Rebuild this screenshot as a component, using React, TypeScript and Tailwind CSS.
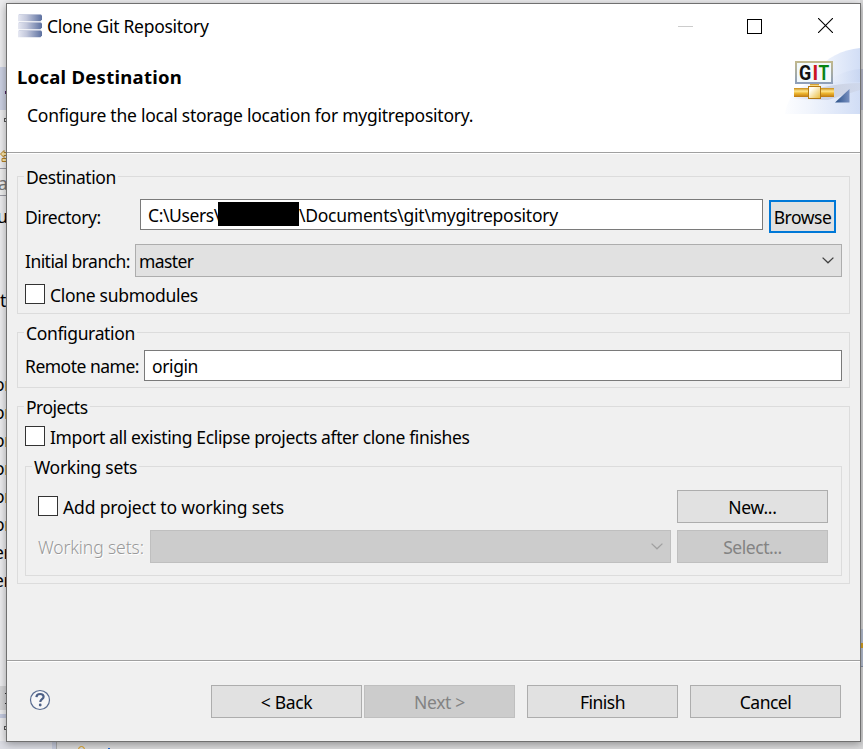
import type { ReactNode } from "react";
import clsx from "clsx";

function Text({ children, className }: { children: ReactNode; className?: string }) {
  return <span className={clsx("block whitespace-pre leading-[18px] pb-[2px]", className)}>{children}</span>;
}

function Group({ title, titleClass, className, children }: { title: string; titleClass: string; className: string; children: ReactNode }) {
  return (
    <section className={clsx("border border-[#dcdcdc]", className)}>
      <div className={clsx("-mt-[9px] ml-[6px] h-5 bg-[#f0f0f0] pl-[2px]", titleClass)}>
        <Text>{title}</Text>
      </div>
      {children}
    </section>
  );
}

function Check() {
  return <span className="block size-5 shrink-0 border border-[#333] bg-white" />;
}

function Button({ children, disabled, className }: { children: ReactNode; disabled?: boolean; className?: string }) {
  return (
    <button
      className={clsx(
        "flex h-[33px] w-[151px] shrink-0 items-center justify-center border pt-[2px]",
        disabled ? "border-[#bfbfbf] bg-[#cccccc] text-[#838383]" : "border-[#adadad] bg-[#e1e1e1]",
        className,
      )}
    >
      {children}
    </button>
  );
}

function Chevron({ className }: { className: string }) {
  return (
    <svg width="12" height="7" viewBox="0 0 12 7" fill="none" stroke="currentColor" strokeWidth="1.3" className={className}>
      <path d="M0.6 0.6 6 5.8 11.4 0.6" />
    </svg>
  );
}

function DatabaseIcon() {
  return (
    <svg width="24" height="24" viewBox="0 0 24 24">
      <defs>
        <linearGradient id="db">
          <stop offset="0" stopColor="#e6e8f2" />
          <stop offset="0.35" stopColor="#c3c8dc" />
          <stop offset="1" stopColor="#5c70a0" />
        </linearGradient>
      </defs>
      {[0, 8, 16].map((y) => (
        <g key={y}>
          <path d={`M0 ${y + 0.5}H23L24 ${y + 1.5}V${y + 5.5}L22.5 ${y + 7.2}H0Z`} fill="url(#db)" />
          <path d={`M1 ${y + 0.5}H22`} stroke="#a9b2ce" strokeWidth="0.7" opacity="0.6" />
        </g>
      ))}
    </svg>
  );
}

function GitBanner() {
  return (
    <svg width="75" height="66" viewBox="0 0 75 66" className="block">
      <defs>
        <linearGradient id="sky">
          <stop offset="0" stopColor="#fcfdff" />
          <stop offset="1" stopColor="#d2def6" />
        </linearGradient>
        <linearGradient id="sky2">
          <stop offset="0" stopColor="#f2f6fe" />
          <stop offset="1" stopColor="#bdcdec" />
        </linearGradient>
        <linearGradient id="shade">
          <stop offset="0" stopColor="#b8bccb" stopOpacity="0" />
          <stop offset="0.4" stopColor="#b8bccb" stopOpacity="0.55" />
          <stop offset="1" stopColor="#cdd4e5" stopOpacity="0.6" />
        </linearGradient>
        <linearGradient id="pipe" x2="0" y2="1">
          <stop offset="0" stopColor="#c88b18" />
          <stop offset="0.35" stopColor="#ffe68c" />
          <stop offset="0.6" stopColor="#edb52f" />
          <stop offset="1" stopColor="#bd7710" />
        </linearGradient>
        <linearGradient id="cube" x2="1" y2="1">
          <stop offset="0.25" stopColor="#fffdf0" />
          <stop offset="1" stopColor="#e9b934" />
        </linearGradient>
        <linearGradient id="frame" x2="0" y2="1">
          <stop offset="0" stopColor="#c1b88d" />
          <stop offset="1" stopColor="#8e9fba" />
        </linearGradient>
        <linearGradient id="tri">
          <stop offset="0" stopColor="#284f87" />
          <stop offset="1" stopColor="#7890c0" />
        </linearGradient>
      </defs>
      <path d="M32 24C41 9 57 2 75 0V66H25Z" fill="url(#sky)" />
      <path d="M40 35C51 27 62 22 75 21V66H40Z" fill="url(#sky2)" opacity="0.45" />
      <path d="M0 66C2 50 14 35 31 34H75V66Z" fill="url(#sky)" opacity="0.85" />
      <path d="M6 51C20 46 32 36 75 35V42L43 52Z" fill="url(#shade)" />
      <rect x="11" y="14" width="36" height="21" fill="#f2f9fc" stroke="url(#frame)" strokeWidth="2" />
      <text y="31.5" fontFamily="Roboto, sans-serif" fontWeight="700" fontSize="19.5">
        <tspan x="14" fill="#111" textLength="12" lengthAdjust="spacingAndGlyphs">G</tspan>
        <tspan x="27.5" fill="#cc1420">I</tspan>
        <tspan x="33.5" fill="#078513" textLength="10.5" lengthAdjust="spacingAndGlyphs">T</tspan>
      </text>
      <rect x="25" y="36" width="9" height="5" fill="url(#pipe)" />
      <rect x="9" y="40" width="40" height="9" fill="url(#pipe)" />
      <rect x="23.5" y="38.5" width="12" height="12" fill="url(#cube)" stroke="#b57a12" />
      <path d="M50 54.5 64.5 41V54.5Z" fill="url(#tri)" />
    </svg>
  );
}

const clipped = [
  { t: "u", y: "top-[207px] -left-[3px]" },
  { t: "t", y: "top-[291px] left-0" },
  { t: "or", y: "top-[375px] -left-[6px]" },
  { t: "or", y: "top-[403px] -left-[6px]" },
  { t: "or", y: "top-[431px] -left-[6px]" },
  { t: "or", y: "top-[459px] -left-[6px]" },
  { t: "or", y: "top-[487px] -left-[6px]" },
  { t: "or", y: "top-[515px] -left-[6px]" },
  { t: "er", y: "top-[543px] -left-[6px]" },
  { t: "er", y: "top-[571px] -left-[6px]" },
];

function Backdrop() {
  return (
    <div className="absolute inset-0 bg-[#ececee]">
      <div className="absolute left-0 top-[67px] h-[43px] w-[7px] bg-[#cbd0e2]" />
      <div className="absolute left-0 top-[168px] h-[28px] w-[7px] border-y border-[#9a9aa4] bg-[#eeeeee]" />
      <div className="absolute left-[5px] top-[91px] h-[3px] w-px bg-[#4d2260]" />
      <div className="absolute left-1 top-[118px] size-1 border border-[#555]" />
      <svg className="absolute left-0 top-[150px]" width="7" height="13" viewBox="0 0 7 13" fill="#fbe8ac" stroke="#b48025">
        <path d="M7 2.5H4V.5L.5 4 4 7.5V5.5H7M7 8.5H2V11.5H7" />
      </svg>
      <Text className="absolute -left-[2px] top-[174px] text-[#777]">a</Text>
      {clipped.map((c) => (
        <Text key={c.y} className={clsx("absolute", c.y)}>{c.t}</Text>
      ))}
      <div className="absolute left-0 top-[686px] h-[24px] w-[7px] bg-[#d4d4d6]" />
      <div className="absolute left-[5px] top-[693px] h-[11px] w-px border-y border-[#333]" />
      <div className="absolute left-0 top-[714px] h-[4px] w-[7px] bg-[#c3c9de]" />
      <div className="absolute left-1 top-[726px] size-1 border border-[#555]" />
      <div className="absolute bottom-0 left-0 h-[8px] w-full bg-[#dadadb]" />
      <div className="absolute bottom-0 left-0 h-[8px] w-[52px] bg-[#dcdde4]" />
      <div className="absolute bottom-0 left-[52px] h-[8px] w-[5px] border-r border-[#aaa] bg-[#c5cadb]" />
      <div className="absolute left-[78px] top-[746px] size-[7px] rounded-full border border-[#d99c13]" />
      <div className="absolute left-[108px] top-[748px] h-px w-[2px] bg-[#2266cc]" />
      <div className="absolute right-0 top-0 h-full w-[3px] bg-[#d8d8d9]" />
      <div className="absolute right-0 top-[69px] h-[41px] w-[3px] bg-[#b8bccd]" />
      <div className="absolute right-0 top-[629px] h-[38px] w-[3px] border-b border-[#8794ab] bg-[#b8c2d4]" />
      <div className="absolute right-0 top-[643px] h-[5px] w-[2px] bg-[#d7a221]" />
    </div>
  );
}

export default function App() {
  return (
    <div className="relative h-[749px] w-[863px] overflow-hidden pl-[6px] pt-[3px] font-['Noto_Sans',sans-serif] text-[17.5px] tracking-[-0.25px] text-black">
      <Backdrop />
      <main className="relative flex h-[739px] w-[855px] flex-col border border-[#707070] bg-[#f0f0f0] shadow-[0_2px_8px_rgba(0,0,0,0.35)]">
        <header className="flex h-[148px] shrink-0 justify-between bg-white">
          <div>
            <div className="flex h-[43px] items-center pl-[11px]">
              <DatabaseIcon />
              <Text className="ml-[5px] mt-[2px] tracking-[-0.3px]">Clone Git Repository</Text>
            </div>
            <Text className="ml-[10px] mt-[21px] text-[18.5px] font-bold tracking-[0.27px]">Local Destination</Text>
            <Text className="ml-[20px] mt-[18px]">Configure the local storage location for mygitrepository.</Text>
          </div>
          <div className="flex flex-col items-end">
            <div className="flex h-[44px] items-center pr-[27px]">
              <span className="mr-[54px] h-px w-[15px] bg-[#ccc]" />
              <span className="mr-[56px] size-[15px] border border-black" />
              <svg width="15" height="15" viewBox="0 0 15 15" stroke="#000" strokeWidth="1.1" className="-mt-px">
                <path d="M0 0 15 15M15 0 0 15" />
              </svg>
            </div>
            <GitBanner />
          </div>
        </header>
        <div className="h-[2px] shrink-0 border-t border-[#a0a0a0] bg-white" />

        <div className="mt-[22px] flex flex-col gap-[18px] px-[10px]">
          <Group title="Destination" titleClass="w-[94px] tracking-[-0.45px]" className="h-[138px]">
            <div className="mt-[11px] flex h-[34px] items-start pl-[7px]">
              <Text className="mt-[9px] w-[115px] tracking-[-0.45px]">Directory:</Text>
              <div className="flex h-[31px] w-[623px] items-center border border-[#7a7a7a] bg-white pl-[7px]">
                <Text className="mt-[3px] w-[70px] tracking-[-0.4px]">C:\Users\</Text>
                <span className="-mt-px h-[24px] w-[81px] bg-black" />
                <Text className="mt-[3px]">\Documents\git\mygitrepository</Text>
              </div>
              <button className="ml-[6px] mt-px flex h-[33px] w-[67px] items-center justify-center border-2 border-[#0078d7] bg-[#e1e1e1] pt-[2px]">
                <Text className="tracking-[-0.5px]">Browse</Text>
              </button>
            </div>
            <div className="mt-[11px] flex h-[33px] items-center pl-[7px]">
              <Text className="mt-[3px] w-[110px] tracking-[-0.55px]">Initial branch:</Text>
              <div className="flex h-[33px] w-[707px] items-center justify-between border border-[#adadad] bg-[#e1e1e1] pl-[3px] pr-[7px]">
                <Text className="mt-[3px] tracking-[-0.6px]">master</Text>
                <Chevron className="text-[#404040]" />
              </div>
            </div>
            <div className="mt-[7px] flex h-5 items-center gap-[5px] pl-[7px]">
              <Check />
              <Text className="mt-[3px] tracking-[-0.3px]">Clone submodules</Text>
            </div>
          </Group>

          <Group title="Configuration" titleClass="w-[113px] tracking-[-0.35px]" className="h-[56px]">
            <div className="mt-[6px] flex h-[31px] items-center pl-[7px]">
              <Text className="mt-[3px] w-[119px] tracking-[-0.5px]">Remote name:</Text>
              <div className="flex h-[31px] w-[698px] items-center border border-[#7a7a7a] bg-white pl-[7px]">
                <Text className="mt-[3px] tracking-[-0.4px]">origin</Text>
              </div>
            </div>
          </Group>

          <Group title="Projects" titleClass="w-[66px] tracking-[-0.5px]" className="h-[178px]">
            <div className="mt-[8px] flex h-5 items-center gap-[5px] pl-[7px]">
              <Check />
              <Text className="mt-[3px] tracking-[-0.37px]">Import all existing Eclipse projects after clone finishes</Text>
            </div>
            <Group title="Working sets" titleClass="w-[107px] tracking-[-0.3px]" className="mx-[7px] mt-[20px] h-[110px]">
              <div className="mt-[12px] flex h-[33px] items-center justify-between pl-[12px] pr-[13px]">
                <div className="-mt-px flex h-5 items-center gap-[5px]">
                  <Check />
                  <Text className="mt-[3px] tracking-[-0.15px]">Add project to working sets</Text>
                </div>
                <Button><Text>New...</Text></Button>
              </div>
              <div className="mt-[7px] flex h-[33px] items-center pl-[12px]">
                <Text className="mt-[2px] w-[112px] font-light tracking-[-0.1px] text-[#999] [text-shadow:1px_1px_0_white]">Working sets:</Text>
                <div className="flex h-[33px] w-[521px] items-center justify-end border border-[#bfbfbf] bg-[#cccccc] pr-[7px]">
                  <Chevron className="text-[#a0a0a0]" />
                </div>
                <Button disabled className="ml-[6px]"><Text className="tracking-[-0.45px]">Select...</Text></Button>
              </div>
            </Group>
          </Group>
        </div>

        <footer className="mt-[76px] flex grow items-start border-t border-[#a0a0a0] pl-[22px] pt-[24px] shadow-[inset_0_1px_0_white]">
          <svg width="22" height="22" viewBox="0 0 22 22" className="mt-[4px]">
            <circle cx="11" cy="11" r="9.5" fill="#f6f6f8" stroke="#586b91" strokeWidth="1.2" />
            <path d="M7.4 8.2C7.6 5.8 9 5 11.1 5c2 0 3.5 1 3.5 2.8 0 2.4-3.3 2.5-3.3 5.2" fill="none" stroke="#4d6087" strokeWidth="2.2" />
            <circle cx="11.2" cy="16" r="1.4" fill="#4d6087" />
          </svg>
          <div className="ml-[160px] flex">
            <Button><Text className="tracking-[-0.35px]">{"< Back"}</Text></Button>
            <Button disabled className="ml-[2px]"><Text className="tracking-[-0.35px]">{"Next >"}</Text></Button>
            <Button className="ml-[12px]"><Text className="tracking-[-0.5px]">Finish</Text></Button>
            <Button className="ml-[12px]"><Text className="tracking-[-0.5px]">Cancel</Text></Button>
          </div>
        </footer>
      </main>
    </div>
  );
}
